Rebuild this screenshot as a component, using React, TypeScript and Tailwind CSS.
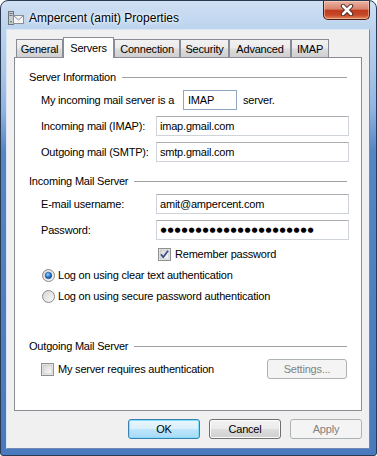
import React from "react";

/* ── 小部件 ──────────────────────────────────────────────── */

const FONT = "font-['Liberation_Sans',Arial,sans-serif]";

function SectionHeader({ title, className = "" }: { title: string; className?: string }) {
  return (
    <div className={`flex h-[14px] items-center pr-[2px] ${className}`}>
      <span className="whitespace-nowrap">{title}</span>
      <div className="ml-[6px] h-px flex-1 bg-[#a0a0a0]" />
    </div>
  );
}

function TextBox({ value, className = "" }: { value: React.ReactNode; className?: string }) {
  return (
    <div
      className={`flex h-[20px] items-center border border-[#cfd3da] border-t-[#abadb3] bg-white pl-[3px] ${className}`}
    >
      {value}
    </div>
  );
}

function CheckBox({ checked }: { checked?: boolean }) {
  return (
    <svg width="13" height="13" viewBox="0 0 13 13" className="shrink-0">
      <defs>
        <linearGradient id={checked ? "cbg1" : "cbg0"} x1="0" y1="0" x2="1" y2="1">
          <stop offset="0" stopColor="#d6d6d6" />
          <stop offset="1" stopColor="#fafafa" />
        </linearGradient>
      </defs>
      <rect x="0.5" y="0.5" width="12" height="12" fill="#f4f4f4" stroke="#8e8f8f" />
      <rect x="2" y="2" width="9" height="9" fill={`url(#${checked ? "cbg1" : "cbg0"})`} stroke="#b4b4b4" strokeWidth="0.6" />
      {checked && (
        <path d="M3 6.3 L5.2 9.3 L10 2.8" fill="none" stroke="#3b4f8c" strokeWidth="1.8" strokeLinejoin="round" />
      )}
    </svg>
  );
}

function Radio({ selected }: { selected?: boolean }) {
  return (
    <svg width="13" height="13" viewBox="0 0 13 13" className="shrink-0">
      <defs>
        <linearGradient id="rbg" x1="0" y1="0" x2="1" y2="1">
          <stop offset="0" stopColor="#d4d4d4" />
          <stop offset="1" stopColor="#fbfbfb" />
        </linearGradient>
        <radialGradient id="rdot" cx="0.4" cy="0.35" r="0.7">
          <stop offset="0" stopColor="#9fd6fb" />
          <stop offset="0.5" stopColor="#2f7fd0" />
          <stop offset="1" stopColor="#0d3f86" />
        </radialGradient>
      </defs>
      <circle cx="6.5" cy="6.5" r="6" fill="url(#rbg)" stroke="#8a8a8a" />
      {selected && <circle cx="6.5" cy="6.5" r="3.3" fill="url(#rdot)" stroke="#1b4c8c" strokeWidth="0.5" />}
    </svg>
  );
}

function Button({ label, kind = "normal", className = "" }: { label: string; kind?: "default" | "normal" | "disabled"; className?: string }) {
  const styles = {
    default:
      "border-[#3c7fb1] bg-[linear-gradient(180deg,#eaf6fd_0%,#d9f0fc_48%,#bee6fd_52%,#a7d9f5_100%)] shadow-[inset_0_0_0_1px_#7fe0fb] text-black",
    normal:
      "border-[#707070] bg-[linear-gradient(180deg,#f2f2f2_0%,#ebebeb_48%,#dddddd_52%,#cfcfcf_100%)] shadow-[inset_0_0_0_1px_#fcfcfc] text-black",
    disabled: "border-[#adb2b5] bg-[#f4f4f4] text-[#838383]",
  }[kind];
  return (
    <div className={`flex h-[20px] items-center justify-center rounded-[3px] border ${styles} ${className}`}>
      {label}
    </div>
  );
}

const TABS = [
  { name: "General", w: "w-[47px]" },
  { name: "Servers", w: "w-[51px]", active: true },
  { name: "Connection", w: "w-[66px]" },
  { name: "Security", w: "w-[49px]" },
  { name: "Advanced", w: "w-[62px]" },
  { name: "IMAP", w: "w-[38px]" },
];

/* ── 窗口 ──────────────────────────────────────────────── */

export default function App() {
  return (
    <div className={`h-[456px] w-[377px] bg-white text-[11px] tracking-[-0.2px] text-black ${FONT}`}>
      <div className="flex h-full flex-col rounded-t-[8px] rounded-b-[3px] border border-[#2a3a52] bg-[linear-gradient(180deg,#cfe0f3_0%,#bcd3ee_28px,#a9c6e9_70px,#8fb2df_110px,#5685c4_150px,#4a79bd_100%)]">
        {/* 标题栏 */}
        <div className="flex h-[28px] shrink-0 items-start">
          <div className="ml-[7px] mt-[8px] flex items-center">
            <svg width="16" height="16" viewBox="0 0 16 16">
              <rect x="0.5" y="1.5" width="5" height="13" fill="#c9cdd2" stroke="#6c737c" />
              <rect x="1.5" y="3" width="3" height="1" fill="#6c737c" />
              <rect x="1.5" y="5" width="3" height="1" fill="#6c737c" />
              <rect x="2" y="11" width="2" height="1.5" fill="#4caf50" />
              <rect x="5.5" y="5.5" width="10" height="8" fill="#f4f4f4" stroke="#8a8f96" />
              <path d="M5.8 5.8 L10.5 10 L15.2 5.8" fill="none" stroke="#8a8f96" />
            </svg>
            <span className="ml-[5px] text-[12px] tracking-normal text-black [text-shadow:0_0_6px_#ffffff,0_0_3px_#ffffff]">
              Ampercent (amit) Properties
            </span>
          </div>
          <div className="ml-auto mr-[6px] flex h-[19px] w-[47px] items-center justify-center rounded-b-[5px] border border-t-0 border-[#4b1d16] bg-[linear-gradient(180deg,#eab3a4_0%,#d8826d_45%,#c03a1d_52%,#c7482a_78%,#e2885c_100%)] shadow-[inset_0_0_0_1px_rgba(255,220,200,0.5)]">
            <svg width="14" height="12" viewBox="0 0 14 12">
              <path d="M3 2 L11 10 M11 2 L3 10" stroke="#3d1f1a" strokeWidth="4.4" strokeLinecap="round" />
              <path d="M3 2 L11 10 M11 2 L3 10" stroke="#ffffff" strokeWidth="2.6" strokeLinecap="round" />
            </svg>
          </div>
        </div>

        {/* 客户区 */}
        <div className="mb-[6px] ml-[5px] mr-[6px] flex flex-1 flex-col border border-[#dce6f2] border-b-[#6d8bb5] border-r-[#6d8bb5] bg-[#f0f0f0] px-[7px] pb-[9px] pt-[7px]">
          {/* 标签 */}
          <div className="relative z-10 flex h-[20px] items-end pl-[2px]">
            {TABS.map((t) =>
              t.active ? (
                <div
                  key={t.name}
                  className={`${t.w} -mb-px flex h-[21px] items-start justify-center border border-b-0 border-[#898c95] bg-white pt-[2px]`}
                >
                  {t.name}
                </div>
              ) : (
                <div
                  key={t.name}
                  className={`${t.w} flex h-[18px] items-center justify-center border border-b-0 border-[#898c95] bg-[linear-gradient(180deg,#f2f2f2_0%,#ebebeb_48%,#dddddd_52%,#cfcfcf_100%)] pt-[1px]`}
                >
                  {t.name}
                </div>
              )
            )}
          </div>

          {/* 面板 */}
          <div className="flex h-[354px] flex-col border border-[#898c95] bg-white pl-[14px] pr-[12px]">
            <SectionHeader title="Server Information" className="mt-[12px]" />
            <div className="mt-[6px] flex h-[20px] items-center pl-[12px]">
              <span className="w-[142px]">My incoming mail server is a</span>
              <div className="flex h-[20px] w-[54px] items-center border border-[#8ea6c6] pl-[4px]">IMAP</div>
              <span className="ml-[6px]">server.</span>
            </div>
            <div className="mt-[6px] flex items-center pl-[12px]">
              <span className="w-[115px]">Incoming mail (IMAP):</span>
              <TextBox value="imap.gmail.com" className="flex-1" />
            </div>
            <div className="mt-[6px] flex items-center pl-[12px]">
              <span className="w-[115px]">Outgoing mail (SMTP):</span>
              <TextBox value="smtp.gmail.com" className="flex-1" />
            </div>

            <SectionHeader title="Incoming Mail Server" className="mt-[12px]" />
            <div className="mt-[6px] flex items-center pl-[12px]">
              <span className="w-[115px]">E-mail username:</span>
              <TextBox value="amit@ampercent.com" className="flex-1" />
            </div>
            <div className="mt-[6px] flex items-center pl-[12px]">
              <span className="w-[115px]">Password:</span>
              <TextBox
                className="flex-1"
                value={
                  <span className="flex">
                    {Array.from({ length: 22 }).map((_, i) => (
                      <span key={i} className="w-[7px] text-center font-['DejaVu_Sans',sans-serif] text-[7px] leading-none">
                        ●
                      </span>
                    ))}
                  </span>
                }
              />
            </div>
            <div className="mt-[7px] flex h-[14px] items-center pl-[129px]">
              <CheckBox checked />
              <span className="ml-[4px]">Remember password</span>
            </div>
            <div className="mt-[7px] flex h-[14px] items-center pl-[13px]">
              <Radio selected />
              <span className="ml-[3px]">Log on using clear text authentication</span>
            </div>
            <div className="mt-[7px] flex h-[14px] items-center pl-[13px]">
              <Radio />
              <span className="ml-[3px]">Log on using secure password authentication</span>
            </div>

            <SectionHeader title="Outgoing Mail Server" className="mt-[36px]" />
            <div className="mt-[6px] flex h-[20px] items-center pl-[12px]">
              <CheckBox />
              <span className="ml-[4px]">My server requires authentication</span>
              <Button label="Settings..." kind="disabled" className="ml-auto mr-[2px] w-[80px]" />
            </div>
          </div>

          {/* 按钮 */}
          <div className="mt-[8px] flex justify-end gap-[9px]">
            <Button label="OK" kind="default" className="w-[72px]" />
            <Button label="Cancel" className="w-[72px]" />
            <Button label="Apply" kind="disabled" className="w-[72px]" />
          </div>
        </div>
      </div>
    </div>
  );
}
